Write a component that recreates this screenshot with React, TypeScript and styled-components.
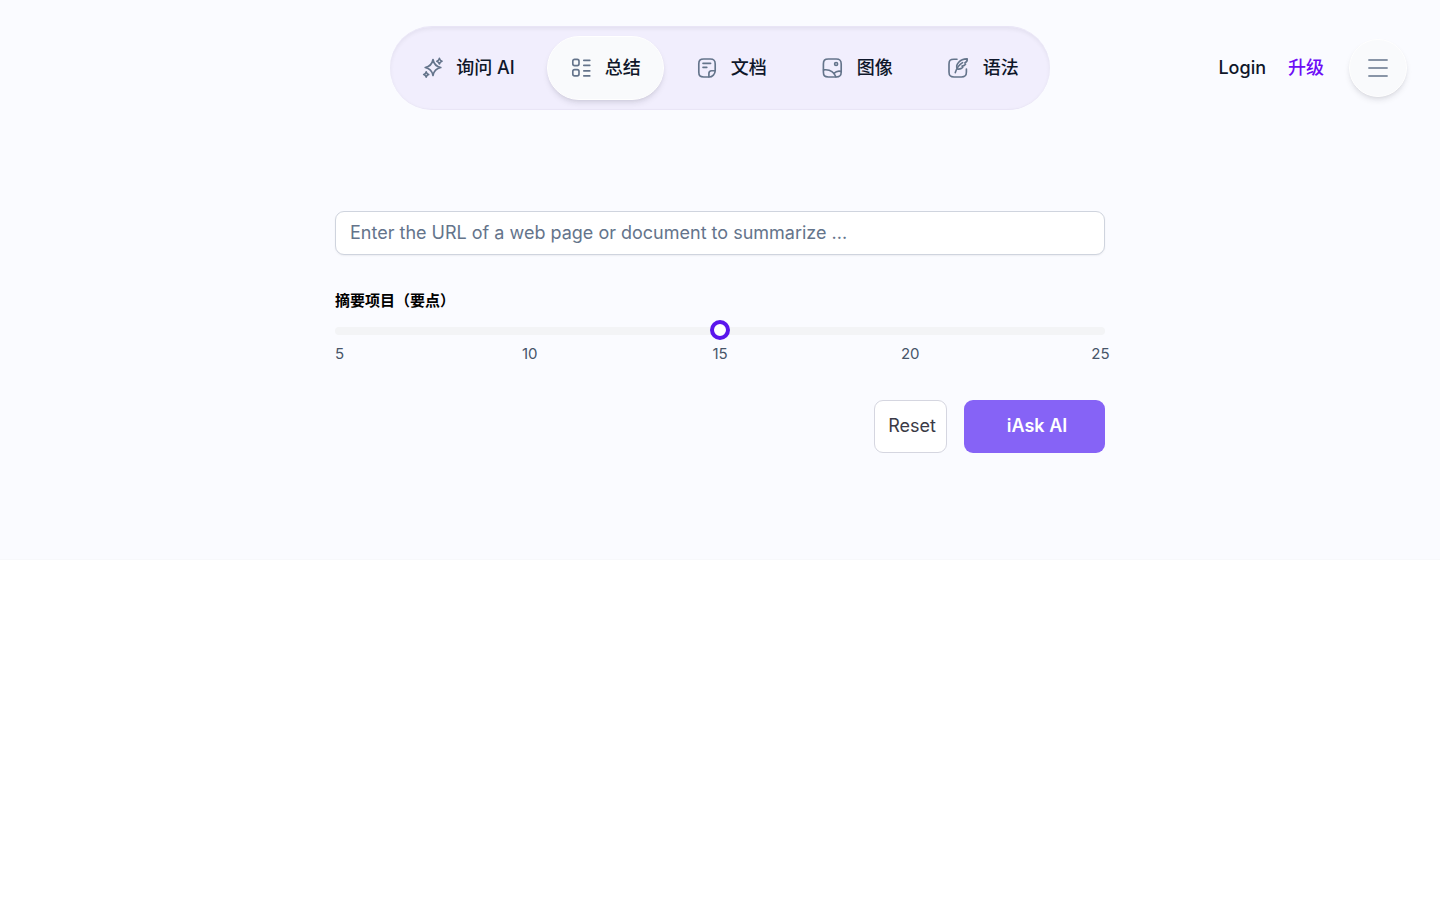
import React, { useState } from "react";
import styled, { createGlobalStyle, css } from "styled-components";

const GlobalStyle = createGlobalStyle`
  *, *::before, *::after { box-sizing: border-box; }
  body {
    margin: 0;
    background: #ffffff;
    color: #0f172a;
    font-family: Inter, "Noto Sans CJK SC", sans-serif;
    font-size: 18px;
    line-height: 28px;
  }
  button, input { font: inherit; color: inherit; margin: 0; }
  a { color: inherit; text-decoration: none; }
`;

const Page = styled.div`
  background: #fafbff;
  border-bottom: 1px solid #f7f8fb;
  padding-bottom: 106px;
`;

const Header = styled.header`
  display: grid;
  grid-template-columns: 1fr auto 1fr;
  align-items: center;
  padding: 26px 33px 0;
`;

const Nav = styled.nav`
  grid-column: 2;
  display: flex;
  gap: 9px;
  padding: 9px 8px;
  border: 1px solid #e9e5f6;
  border-width: 1px 0;
  border-radius: 42px;
  background: #f1eefd;
  box-shadow: inset 0 2px 4px rgba(15, 23, 42, 0.06);
`;

const raised = css`
  background: #f9fafc;
  border: 1px solid #ffffff;
  box-shadow: 0 4px 6px -1px rgba(15, 23, 42, 0.1), 0 2px 4px -2px rgba(15, 23, 42, 0.1);
`;

const NavLink = styled.a<{ $active?: boolean }>`
  display: flex;
  align-items: center;
  gap: 13px;
  height: 64px;
  padding: 0 22px;
  border: 1px solid transparent;
  border-radius: 32px;
  font-weight: 500;
  white-space: nowrap;
  ${(p) => p.$active && raised}
`;

const Icon = styled.svg`
  width: 22px;
  height: 22px;
  flex: none;
  fill: none;
  stroke: #64748b;
  stroke-width: 1.65;
  stroke-linecap: round;
  stroke-linejoin: round;
`;

const Account = styled.div`
  display: flex;
  align-items: center;
  justify-content: flex-end;
  font-weight: 500;
`;

const AccountLink = styled.a<{ $accent?: boolean }>`
  margin-left: 22px;
  color: ${(p) => (p.$accent ? "#6d0cf6" : "#0f172a")};
`;

const MenuButton = styled.button`
  display: flex;
  align-items: center;
  justify-content: center;
  width: 58px;
  height: 58px;
  margin-left: 25px;
  padding: 0;
  border-radius: 50%;
  cursor: pointer;
  ${raised}
`;

const Form = styled.form`
  max-width: 770px;
  margin: 101px auto 0;
`;

const UrlInput = styled.input`
  display: block;
  width: 100%;
  height: 44px;
  padding: 0 14px 2px;
  border: 1px solid #cfd4de;
  border-radius: 9px;
  background: #ffffff;
  box-shadow: 0 1px 2px rgba(15, 23, 42, 0.06);
  &::placeholder { color: #64748b; opacity: 1; }
`;

const Label = styled.label`
  display: block;
  margin-top: 35px;
  color: #000000;
  font-size: 15px;
  font-weight: 600;
  line-height: 22px;
`;

const thumb = css`
  width: 20px;
  height: 20px;
  border: 4px solid #5b16ec;
  border-radius: 50%;
  background: #ffffff;
`;

const Slider = styled.input`
  display: block;
  appearance: none;
  width: 100%;
  height: 8px;
  margin-top: 15px;
  border-radius: 4px;
  background: #f3f4f6;
  cursor: pointer;
  &::-webkit-slider-runnable-track { height: 8px; }
  &::-webkit-slider-thumb {
    appearance: none;
    margin-top: -7px;
    ${thumb}
  }
`;

const Ticks = styled.div`
  display: flex;
  justify-content: space-between;
  margin: 7px -5px 0;
  color: #475569;
  font-size: 15px;
  line-height: 24px;
`;

const Tick = styled.span`
  width: 19px;
  text-align: center;
`;

const Actions = styled.div`
  display: flex;
  justify-content: flex-end;
  gap: 17px;
  margin-top: 34px;
`;

const Button = styled.button<{ $primary?: boolean }>`
  height: 53px;
  border-radius: 9px;
  cursor: pointer;
  ${(p) =>
    p.$primary
      ? css`
          width: 141px;
          padding: 0 0 2px 5px;
          border: 0;
          background: #8663f6;
          color: #ffffff;
          font-weight: 600;
        `
      : css`
          width: 73px;
          padding: 0 0 2px 3px;
          border: 1px solid #d5d6e0;
          background: #ffffff;
          color: #3a3a46;
        `}
`;

const SparkleIcon = () => (
  <Icon viewBox="-1 0 22 22" aria-hidden="true">
    <path d="M11 2.5C11.9 7.3 14 9.6 18.8 10.5C14 11.4 11.9 13.7 11 18.5C10.1 13.7 8 11.4 3.2 10.5C8 9.6 10.1 7.3 11 2.5Z" />
    <path d="M17.4 1.4Q18 3.6 20 4.2Q18 4.8 17.4 7Q16.8 4.8 14.8 4.2Q16.8 3.6 17.4 1.4Z" />
    <path d="M4.2 14.9Q4.7 17 6.7 17.5Q4.7 18 4.2 20.1Q3.7 18 1.7 17.5Q3.7 17 4.2 14.9Z" />
  </Icon>
);

const ListIcon = () => (
  <Icon viewBox="0 0 22 22" aria-hidden="true">
    <rect x="2.8" y="2.4" width="6.2" height="6.2" rx="1.8" />
    <rect x="2.8" y="12.6" width="6.2" height="6.2" rx="1.8" />
    <path d="M13.8 3.4H19.8M13.8 8.4H19.8M13.8 13.9H19.8M13.8 18.9H19.8" />
  </Icon>
);

const DocIcon = () => (
  <Icon viewBox="0 0 22 22" aria-hidden="true">
    <path d="M2.8 7C2.8 3.2 4 2 7.8 2H14.2C18 2 19.2 3.2 19.2 7V13.6C19.2 17 16.4 20 13 20H7.8C4 20 2.8 18.8 2.8 15Z" />
    <path d="M12.9 19.8V16.4C12.9 14.4 13.6 13.7 15.6 13.7H19.1" />
    <path d="M7 6.4H14.6M7 10.4H10.8" />
  </Icon>
);

const ImageIcon = () => (
  <Icon viewBox="0 0 22 22" aria-hidden="true">
    <path d="M1.4 7C1.4 3.2 2.6 2 6.4 2H14.2C18 2 19.2 3.2 19.2 7V15C19.2 18.8 18 20 14.2 20H6.4C2.6 20 1.4 18.8 1.4 15Z" />
    <circle cx="14.1" cy="7" r="1.5" />
    <path d="M1.6 12.9C7 12.2 11.8 14.6 13.9 19.8" />
    <path d="M11.9 16.4C13.9 14.4 16.4 13.7 19 14.4" />
  </Icon>
);

const QuillIcon = () => (
  <Icon viewBox="0 0 22 22" aria-hidden="true">
    <path d="M9 2.2H6C2.2 2.2 1 3.4 1 7.2V15C1 18.8 2.2 20 6 20H13.4C17.2 20 18.4 18.8 18.4 15V12" />
    <path d="M7.3 15.6C8.8 10.6 11.1 7.6 14.6 5.6" />
    <path d="M9.4 11.9C6.9 7.6 12.1 1.7 19.2 1.9C19.4 3.6 18.7 5.1 16.9 5.7L17.5 7.2C16.6 8.5 15.5 8.9 14.1 9.1L14.7 10.4C13.1 11.9 11.3 12.4 9.4 11.9Z" />
  </Icon>
);

const MenuIcon = () => (
  <Icon viewBox="0 0 22 22" aria-hidden="true">
    <path d="M1.9 3H20.1M1.9 11H20.1M1.9 19H20.1" />
  </Icon>
);

const navItems = [
  { text: "询问 AI", icon: SparkleIcon },
  { text: "总结", icon: ListIcon },
  { text: "文档", icon: DocIcon },
  { text: "图像", icon: ImageIcon },
  { text: "语法", icon: QuillIcon },
];

export default function App() {
  const [active, setActive] = useState("总结");
  const [url, setUrl] = useState("");
  const [points, setPoints] = useState(15);

  const reset = () => {
    setUrl("");
    setPoints(15);
  };

  return (
    <>
      <GlobalStyle />
      <Page>
        <Header>
          <Nav>
            {navItems.map(({ text, icon: ItemIcon }) => (
              <NavLink
                key={text}
                href="#"
                $active={text === active}
                aria-current={text === active ? "page" : undefined}
                onClick={() => setActive(text)}
              >
                <ItemIcon />
                {text}
              </NavLink>
            ))}
          </Nav>
          <Account>
            <AccountLink href="#">Login</AccountLink>
            <AccountLink href="#" $accent>升级</AccountLink>
            <MenuButton type="button" aria-label="Menu">
              <MenuIcon />
            </MenuButton>
          </Account>
        </Header>
        <Form onSubmit={(e) => e.preventDefault()}>
          <UrlInput
            type="text"
            value={url}
            onChange={(e) => setUrl(e.target.value)}
            aria-label="URL"
            placeholder="Enter the URL of a web page or document to summarize ..."
          />
          <Label htmlFor="points">摘要项目（要点）</Label>
          <Slider
            id="points"
            type="range"
            min={5}
            max={25}
            step={5}
            value={points}
            onChange={(e) => setPoints(Number(e.target.value))}
          />
          <Ticks>
            {[5, 10, 15, 20, 25].map((n) => (
              <Tick key={n}>{n}</Tick>
            ))}
          </Ticks>
          <Actions>
            <Button type="button" onClick={reset}>Reset</Button>
            <Button type="submit" $primary>iAsk AI</Button>
          </Actions>
        </Form>
      </Page>
    </>
  );
}
